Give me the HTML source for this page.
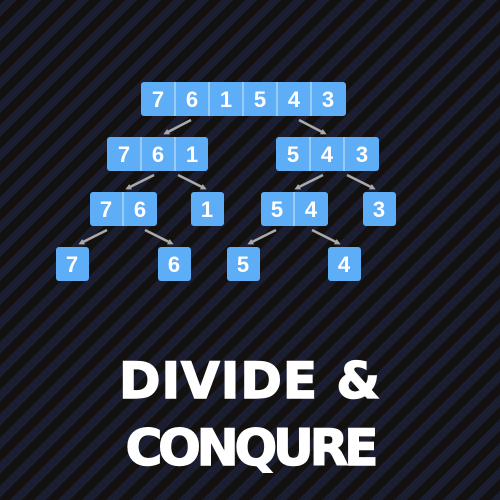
<!DOCTYPE html>
<html><head><meta charset="utf-8"><style>
html,body{margin:0;padding:0}
body{width:500px;height:500px;overflow:hidden;position:relative;
background:repeating-linear-gradient(135deg,#121110 0px,#121110 3.5px,#1b1d30 3.5px,#1b1d30 12px,#121110 12px,#121110 17px);}
svg{position:absolute;left:0;top:0}
.t{position:absolute;left:0;width:500px;text-align:center;color:#fff;font-family:"DejaVu Sans","Liberation Sans",sans-serif;font-weight:bold;font-size:50px;letter-spacing:1px;line-height:1;-webkit-text-stroke:1.5px #fff}
</style></head><body>
<svg width="500" height="500" xmlns="http://www.w3.org/2000/svg">
<defs><marker id="a" markerWidth="6" markerHeight="6" refX="3" refY="3" orient="auto" markerUnits="userSpaceOnUse"><path d="M0,0 L6,3 L0,6 z" fill="#aaa"/></marker></defs>
<g fill="#5eadf7">
<rect x="141" y="82" width="205" height="34" rx="3"/>
<rect x="107" y="137" width="101" height="34" rx="3"/>
<rect x="276" y="137" width="103" height="34" rx="3"/>
<rect x="90" y="192" width="67" height="34" rx="3"/>
<rect x="191" y="192" width="33" height="34" rx="3"/>
<rect x="261" y="192" width="67" height="34" rx="3"/>
<rect x="363" y="192" width="33" height="34" rx="3"/>
<rect x="56" y="247" width="33" height="34" rx="3"/>
<rect x="158" y="247" width="33" height="34" rx="3"/>
<rect x="227" y="247" width="33" height="34" rx="3"/>
<rect x="328" y="247" width="33" height="34" rx="3"/>
</g>
<g stroke="#cfe6fb" stroke-width="1">
<path d="M175 82V116M209 82V116M243 82V116M277 82V116M311 82V116M141 137V171M175 137V171M310 137V171M344 137V171M123 192V226M294 192V226"/>
</g>
<g stroke="#aaa" stroke-width="2.5" fill="none" marker-end="url(#a)">
<path d="M191 120L166 133"/><path d="M299 120L324 133"/>
<path d="M154 175L128 188"/><path d="M178 175L204 188"/>
<path d="M323 175L297 188"/><path d="M347 175L373 188"/>
<path d="M107 230L81 243"/><path d="M145 230L171 243"/>
<path d="M276 230L250 243"/><path d="M312 230L338 243"/>
</g>
<g fill="#fff" font-family="Liberation Sans, sans-serif" font-weight="bold" font-size="22" text-anchor="middle">
<text x="158" y="107">7</text><text x="192" y="107">6</text><text x="226" y="107">1</text><text x="260" y="107">5</text><text x="294" y="107">4</text><text x="328" y="107">3</text>
<text x="124" y="162">7</text><text x="158" y="162">6</text><text x="192" y="162">1</text>
<text x="293" y="162">5</text><text x="327" y="162">4</text><text x="362" y="162">3</text>
<text x="106" y="217">7</text><text x="140" y="217">6</text><text x="207" y="217">1</text>
<text x="277" y="217">5</text><text x="311" y="217">4</text><text x="379" y="217">3</text>
<text x="72" y="272">7</text><text x="174" y="272">6</text><text x="243" y="272">5</text><text x="344" y="272">4</text>
</g>
</svg>
<div class="t" style="top:356px">DIVIDE &amp;</div>
<div class="t" style="top:423px;letter-spacing:-4px">CONQURE</div>
</body></html>
